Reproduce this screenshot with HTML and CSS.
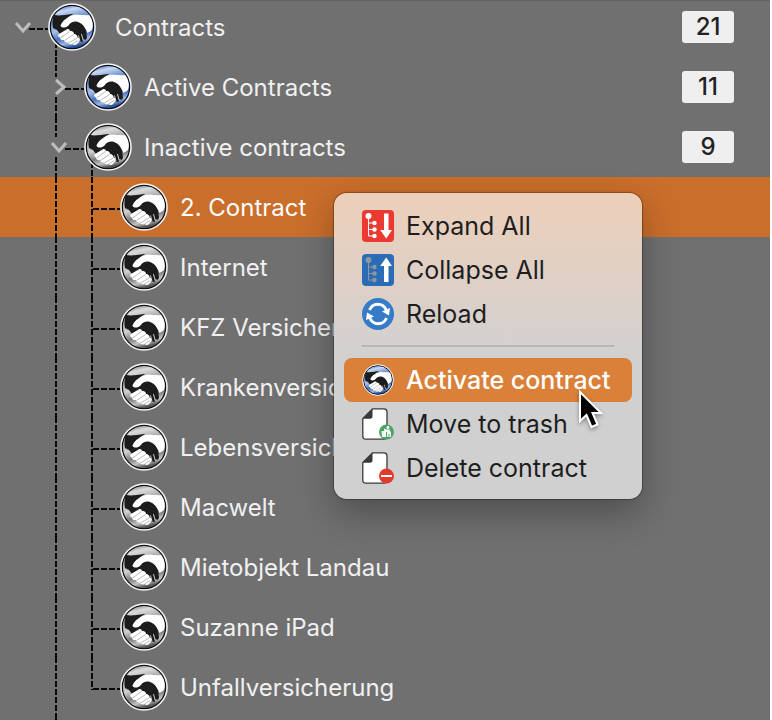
FILE: index.html
```html
<!DOCTYPE html>
<html lang="en">
<head>
<meta charset="utf-8">
<title>Contracts</title>
<link rel="stylesheet" href="styles.css">
</head>
<body>
<svg class="defs" aria-hidden="true">
  <defs>
    <linearGradient id="blue" x1="0" y1="0" x2="0.25" y2="1">
      <stop offset="0" stop-color="#1f3f88"/>
      <stop offset="0.1" stop-color="#4a70b8"/>
      <stop offset="0.22" stop-color="#c9d9f2"/>
      <stop offset="0.4" stop-color="#6f93d0"/>
      <stop offset="0.6" stop-color="#a9c0e6"/>
      <stop offset="0.78" stop-color="#4a70b8"/>
      <stop offset="0.9" stop-color="#9db8e4"/>
      <stop offset="1" stop-color="#2c4f96"/>
    </linearGradient>
    <linearGradient id="grey" x1="0" y1="0" x2="0.25" y2="1">
      <stop offset="0" stop-color="#555"/>
      <stop offset="0.1" stop-color="#888"/>
      <stop offset="0.23" stop-color="#dcdcdc"/>
      <stop offset="0.42" stop-color="#aaa"/>
      <stop offset="0.6" stop-color="#d0d0d0"/>
      <stop offset="0.78" stop-color="#7d7d7d"/>
      <stop offset="0.9" stop-color="#c4c4c4"/>
      <stop offset="1" stop-color="#555"/>
    </linearGradient>
    <symbol id="hands" viewBox="0 0 48 48">
      <path d="M6 12C11 13 17 12 24 11L30 17L35 21L38 27L39 35L37.500 37L35.500 36L35 38.500L33 39L28 37L18 29L12 31L9 27L5 25C4 20 4.500 15 6 12Z" fill="var(--hand)"/>
      <path d="M12.500 22.500C14 18 19 15 22 13C27 10.500 34 13 43 12C45.500 17 45.500 23 43.500 27.500L39.500 30C38 26 35 20.500 30 19C26 17.800 22.500 19.500 20.500 22.500C18.500 25 13 25.500 12.500 22.500Z" fill="#fff"/>
      <path d="M18.500 26.500C20 25.500 22 26.500 22 28C24 27.500 26.500 29.500 26 31C28 31 30 33 29.500 34.500C32 35 32.500 37 31 38.500L29 41C27.500 42.500 25.500 42 24.500 41C22.500 42 20.500 41 20 39.500C17.500 40 16 38.500 16 37C13.500 37.500 12 36.500 12 34.500C10 34 9.500 32 11 31Z" fill="#fff"/>
      <path d="M12.500 35L21.500 28.500M16.500 37.500L25.500 31.500M20.500 40L29 35M24.500 41L30 37.500" fill="none" stroke="#999" stroke-width="0.7"/>
      <path d="M32 38.500L30.500 32.500M35.200 37.500L33.500 31" fill="none" stroke="#ddd" stroke-width="0.9"/>
    </symbol>
    <symbol id="seal-blue" viewBox="0 0 48 48">
      <circle cx="24" cy="24" r="23" fill="url(#blue)"/>
      <use href="#hands"/>
      <circle cx="24" cy="24" r="21.800" fill="none" stroke="#0b1020" stroke-width="1.500"/>
      <circle cx="24" cy="24" r="23.100" fill="none" stroke="#f2f2f2" stroke-width="1.500"/>
    </symbol>
    <symbol id="seal-grey" viewBox="0 0 48 48">
      <circle cx="24" cy="24" r="23" fill="url(#grey)"/>
      <use href="#hands"/>
      <circle cx="24" cy="24" r="21.800" fill="none" stroke="#111" stroke-width="1.500"/>
      <circle cx="24" cy="24" r="23.100" fill="none" stroke="#f2f2f2" stroke-width="1.500"/>
    </symbol>
    <symbol id="page" viewBox="0 0 32 32">
      <path d="M10.500 .8H22Q25 .8 25 4V28Q25 31.200 22 31.200H4Q.8 31.200 .8 28V10.500Z" fill="#fff" stroke="#39393b" stroke-width="1.300"/>
      <path d="M10.500 .8V8Q10.500 10.800 8 10.800H.8Z" fill="#39393b"/>
    </symbol>
  </defs>
</svg>

<main class="tree">
  <ul class="list">
    <li class="row top">
      <button class="cell toggle" aria-label="Collapse Contracts"><svg class="chevron" viewBox="0 0 22 22"><path d="M4 7L11 15L18 7"/></svg><i class="dash"></i></button>
      <span class="seal open"><svg><use href="#seal-blue"/></svg></span>
      <span class="label">Contracts</span><span class="count">21</span>
    </li>
    <li class="row">
      <i class="cell"></i>
      <button class="cell toggle line" aria-label="Expand Active Contracts"><svg class="chevron" viewBox="0 0 22 22"><path d="M8 4L16 11L8 18"/></svg><i class="dash"></i></button>
      <span class="seal"><svg><use href="#seal-blue"/></svg></span>
      <span class="label">Active Contracts</span><span class="count">11</span>
    </li>
    <li class="row">
      <i class="cell"></i>
      <button class="cell toggle line" aria-label="Collapse Inactive contracts"><svg class="chevron" viewBox="0 0 22 22"><path d="M4 7L11 15L18 7"/></svg><i class="dash"></i></button>
      <span class="seal open"><svg><use href="#seal-grey"/></svg></span>
      <span class="label">Inactive contracts</span><span class="count">9</span>
    </li>
    <li class="row selected"><i class="cell"></i><i class="cell line"></i><i class="cell line branch"></i><span class="seal"><svg><use href="#seal-grey"/></svg></span><span class="label">2. Contract</span></li>
    <li class="row"><i class="cell"></i><i class="cell line"></i><i class="cell line branch"></i><span class="seal"><svg><use href="#seal-grey"/></svg></span><span class="label">Internet</span></li>
    <li class="row"><i class="cell"></i><i class="cell line"></i><i class="cell line branch"></i><span class="seal"><svg><use href="#seal-grey"/></svg></span><span class="label">KFZ Versicherung</span></li>
    <li class="row"><i class="cell"></i><i class="cell line"></i><i class="cell line branch"></i><span class="seal"><svg><use href="#seal-grey"/></svg></span><span class="label">Krankenversicherung</span></li>
    <li class="row"><i class="cell"></i><i class="cell line"></i><i class="cell line branch"></i><span class="seal"><svg><use href="#seal-grey"/></svg></span><span class="label">Lebensversicherung</span></li>
    <li class="row"><i class="cell"></i><i class="cell line"></i><i class="cell line branch"></i><span class="seal"><svg><use href="#seal-grey"/></svg></span><span class="label">Macwelt</span></li>
    <li class="row"><i class="cell"></i><i class="cell line"></i><i class="cell line branch"></i><span class="seal"><svg><use href="#seal-grey"/></svg></span><span class="label">Mietobjekt Landau</span></li>
    <li class="row"><i class="cell"></i><i class="cell line"></i><i class="cell line branch"></i><span class="seal"><svg><use href="#seal-grey"/></svg></span><span class="label">Suzanne iPad</span></li>
    <li class="row"><i class="cell"></i><i class="cell line"></i><i class="cell line branch last"></i><span class="seal"><svg><use href="#seal-grey"/></svg></span><span class="label">Unfallversicherung</span></li>
    <li class="row"><i class="cell"></i><i class="cell line"></i></li>
  </ul>
</main>

<div class="menu" role="menu">
  <button class="item" role="menuitem">
    <svg viewBox="0 0 32 32"><rect width="32" height="32" rx="4" fill="#ea3a32"/><g fill="#fff"><circle cx="6.500" cy="6" r="3"/><circle cx="12.500" cy="13" r="2.200"/><circle cx="12.500" cy="19.500" r="2.200"/><circle cx="12.500" cy="26" r="2.200"/><path d="M22 3.500H26.500V20H30L24.200 28.500L18.200 20H22Z"/></g><path d="M6.500 6V26H12M6.500 13H12M6.500 19.500H12" fill="none" stroke="#fff"/></svg>
    Expand All</button>
  <button class="item" role="menuitem">
    <svg viewBox="0 0 32 32"><rect width="32" height="32" rx="4" fill="#2c6cb7"/><g fill="#8e979f"><circle cx="6.500" cy="6" r="3"/><circle cx="12.500" cy="13" r="2.200"/><circle cx="12.500" cy="19.500" r="2.200"/><circle cx="12.500" cy="26" r="2.200"/></g><path d="M6.500 6V26H12M6.500 13H12M6.500 19.500H12" fill="none" stroke="#8e979f"/><path d="M22 28V12H18.200L24.200 3.500L30 12H26.500V28Z" fill="#fff"/></svg>
    Collapse All</button>
  <button class="item" role="menuitem">
    <svg viewBox="0 0 32 32"><circle cx="16" cy="16" r="16" fill="#367bc8"/><g fill="none" stroke="#fff" stroke-width="2.800"><path d="M7.500 12C10.500 4.500 21 4 24.500 12.500"/><path d="M24.500 20C21.500 27.500 11 28 7.500 19.500"/></g><path d="M20 13.500L28 10L27 17.500ZM12 18.500L4 22L5 14.500Z" fill="#fff"/></svg>
    Reload</button>
  <hr class="rule">
  <button class="item active" role="menuitem"><svg><use href="#seal-blue"/></svg>Activate contract
    <svg class="pointer" viewBox="0 0 28 42" aria-hidden="true"><path d="M3 3V32L9.500 26L14.500 38L20.500 35.500L15.500 24H24Z"/></svg>
  </button>
  <button class="item" role="menuitem">
    <svg viewBox="0 0 32 32"><use href="#page"/><circle cx="24.500" cy="24" r="7.500" fill="#4aa564"/><g fill="#fff"><path d="M19.500 23H24V29H20Z"/><circle cx="26" cy="19.500" r="1.400"/><path d="M24.500 21.500H27.500L29 25V29H27.500V26H26.500V29H25V24L22 22.500V20.500Z"/></g></svg>
    Move to trash</button>
  <button class="item" role="menuitem">
    <svg viewBox="0 0 32 32"><use href="#page"/><circle cx="24.500" cy="24" r="7.500" fill="#e43a2b"/><path d="M19 24H30" stroke="#fff" stroke-width="2"/></svg>
    Delete contract</button>
</div>
</body>
</html>
```

FILE: styles.css
```css
* { box-sizing: border-box; }

body {
  margin: 0;
  height: 100vh;
  overflow: hidden;
  background: #fff;
  font-family: Inter, "Liberation Sans", sans-serif;
  font-size: 24px;
}

.defs { position: absolute; width: 0; height: 0; }

.tree {
  height: 100%;
  margin-right: 2px;
  overflow: hidden;
  background: #707070;
  border-top: 1px solid #636363;
}

.list { margin: -4px 0 0; padding: 0; list-style: none; }

.row {
  display: flex;
  align-items: center;
  height: 60px;
  padding: 0 36px 0 12px;
  color: #f0f0f0;
}

.selected { background: #ca6e2b; color: #fff; }

.cell {
  flex: none;
  display: flex;
  align-items: center;
  width: 36px;
  height: 60px;
}

.line {
  background: repeating-linear-gradient(#0a0a0a 0 6px, transparent 6px 8px) 7px 0 / 2px 100% no-repeat;
}

.branch {
  background:
    repeating-linear-gradient(#0a0a0a 0 6px, transparent 6px 8px) 7px 0 / 2px 100% no-repeat,
    repeating-linear-gradient(90deg, #0a0a0a 0 6px, transparent 6px 8px) 9px 31px / 27px 2px no-repeat;
}

.branch.last { background-size: 2px 33px, 27px 2px; }

.toggle {
  padding: 0;
  border: 0;
  background-color: transparent;
}

.toggle.line {
  background:
    linear-gradient(#707070, #707070) 0 20px / 22px 20px no-repeat,
    repeating-linear-gradient(#0a0a0a 0 6px, transparent 6px 8px) 7px 0 / 2px 100% no-repeat;
}

.chevron {
  flex: none;
  width: 22px;
  height: 22px;
  fill: none;
  stroke: #bdbdbd;
  stroke-width: 3;
}

.toggle .chevron { margin-right: -5px; }

.dash {
  flex: 1;
  height: 2px;
  margin-top: 4px;
  background: repeating-linear-gradient(90deg, #0a0a0a 0 6px, transparent 6px 8px);
}

.seal {
  flex: none;
  display: flex;
  align-items: center;
  height: 60px;
}

.seal svg { width: 48px; height: 48px; }

.seal.open {
  background: repeating-linear-gradient(#0a0a0a 0 6px, transparent 6px 8px) 7px 45px / 2px 15px no-repeat;
}

.seal, .item { --hand: #1c1c1c; }

.label { flex: 1; margin-left: 12px; white-space: nowrap; }

.top .label { margin-left: 19px; }

.count {
  width: 52px;
  border-radius: 3px;
  background: #efefef;
  color: #222;
  font-weight: 500;
  line-height: 32px;
  text-align: center;
}

.menu {
  position: absolute;
  left: 334px;
  top: 193px;
  padding: 11px 10px 9px;
  border-radius: 13px;
  background: linear-gradient(#edcfb9, #dfd0c6 28%, #d3d1d0 50%, #d0d0d0 60%);
  box-shadow: 0 0 1px 1px rgba(0, 0, 0, 0.3), 0 14px 36px rgba(0, 0, 0, 0.3);
}

.item {
  position: relative;
  display: flex;
  align-items: center;
  gap: 12px;
  width: 288px;
  height: 44px;
  padding: 0 18px;
  border: 0;
  border-radius: 8px;
  background: none;
  color: #1e1e1e;
  font: inherit;
  font-size: 25px;
  text-align: left;
  white-space: nowrap;
}

.item svg { flex: none; width: 32px; height: 32px; }

.active { background: #da8038; color: #fff; font-weight: 500; }

.rule {
  height: 2px;
  margin: 9px 18px 11px;
  border: 0;
  background: #b7b6b6;
}

.item .pointer {
  position: absolute;
  z-index: 1;
  left: 233px;
  top: 31px;
  width: 28px;
  height: 42px;
  fill: #000;
  stroke: #fff;
  stroke-width: 2;
  filter: drop-shadow(0 2px 2px rgba(0, 0, 0, 0.35));
}
```
